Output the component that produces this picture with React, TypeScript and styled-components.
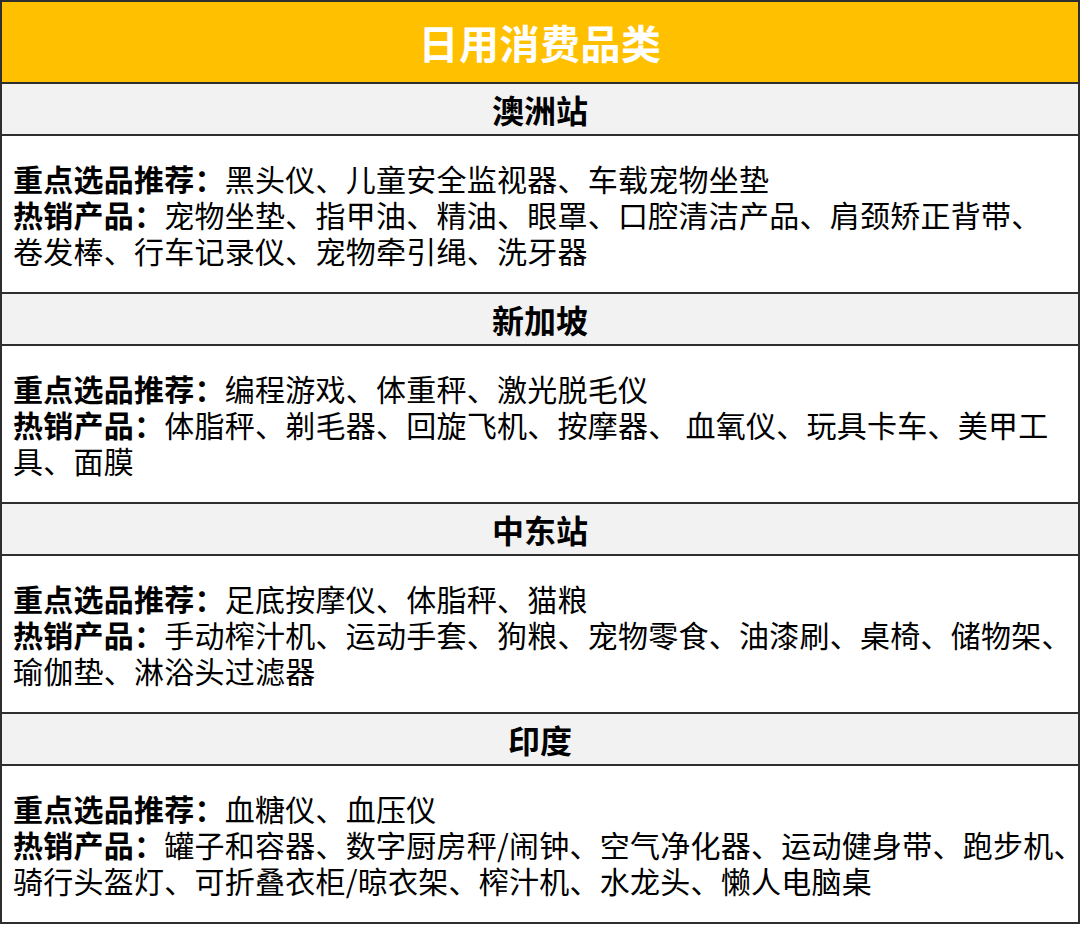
import React from "react";
import styled, { createGlobalStyle } from "styled-components";

const GlobalStyle = createGlobalStyle`
  html, body {
    margin: 0;
    padding: 0;
    background: #ffffff;
  }
  body {
    font-family: "Noto Sans CJK SC", "Noto Sans", sans-serif;
    color: #000;
  }
`;

type Section = {
  name: string;
  picks: string;
  hot: string[]; // lines of the hot-sales text, first one follows the label
};

const sections: Section[] = [
  {
    name: "澳洲站",
    picks: "黑头仪、儿童安全监视器、车载宠物坐垫",
    hot: [
      "宠物坐垫、指甲油、精油、眼罩、口腔清洁产品、肩颈矫正背带、",
      "卷发棒、行车记录仪、宠物牵引绳、洗牙器",
    ],
  },
  {
    name: "新加坡",
    picks: "编程游戏、体重秤、激光脱毛仪",
    hot: ["体脂秤、剃毛器、回旋飞机、按摩器、 血氧仪、玩具卡车、美甲工", "具、面膜"],
  },
  {
    name: "中东站",
    picks: "足底按摩仪、体脂秤、猫粮",
    hot: [
      "手动榨汁机、运动手套、狗粮、宠物零食、油漆刷、桌椅、储物架、",
      "瑜伽垫、淋浴头过滤器",
    ],
  },
  {
    name: "印度",
    picks: "血糖仪、血压仪",
    hot: [
      "罐子和容器、数字厨房秤/闹钟、空气净化器、运动健身带、跑步机、",
      "骑行头盔灯、可折叠衣柜/晾衣架、榨汁机、水龙头、懒人电脑桌",
    ],
  },
];

const Table = styled.div`
  width: 1080px;
  box-sizing: border-box;
  border: 2px solid #2e2e2e;
  display: flex;
  flex-direction: column;
`;

const Title = styled.div`
  height: 80px;
  background: #ffc000;
  border-bottom: 2px solid #2e2e2e;
  display: flex;
  align-items: center;
  justify-content: center;
  color: #ffffff;
  font-size: 40px;
  font-weight: 700;
  letter-spacing: 0.5px;
`;

const SectionHead = styled.div`
  height: 50px;
  background: #f2f2f2;
  border-bottom: 2px solid #2e2e2e;
  display: flex;
  align-items: center;
  justify-content: center;
  font-size: 32px;
  font-weight: 700;
`;

const SectionBody = styled.div<{ $last?: boolean }>`
  padding: 24px 0 24px 11px;
  border-bottom: ${(p) => (p.$last ? "none" : "2px solid #2e2e2e")};
  background: #ffffff;
  overflow: hidden;
`;

const Line = styled.div`
  font-size: 30px;
  line-height: 36px;
  height: 36px;
  letter-spacing: 0.25px;
  white-space: nowrap;
`;

const Label = styled.span`
  font-weight: 700;
`;

export default function App() {
  return (
    <>
      <GlobalStyle />
      <Table>
        <Title>日用消费品类</Title>
        {sections.map((s, i) => (
          <React.Fragment key={s.name}>
            <SectionHead>{s.name}</SectionHead>
            <SectionBody $last={i === sections.length - 1}>
              <Line>
                <Label>重点选品推荐：</Label>
                {s.picks}
              </Line>
              <Line>
                <Label>热销产品：</Label>
                {s.hot[0]}
              </Line>
              {s.hot.slice(1).map((t) => (
                <Line key={t}>{t}</Line>
              ))}
            </SectionBody>
          </React.Fragment>
        ))}
      </Table>
    </>
  );
}
